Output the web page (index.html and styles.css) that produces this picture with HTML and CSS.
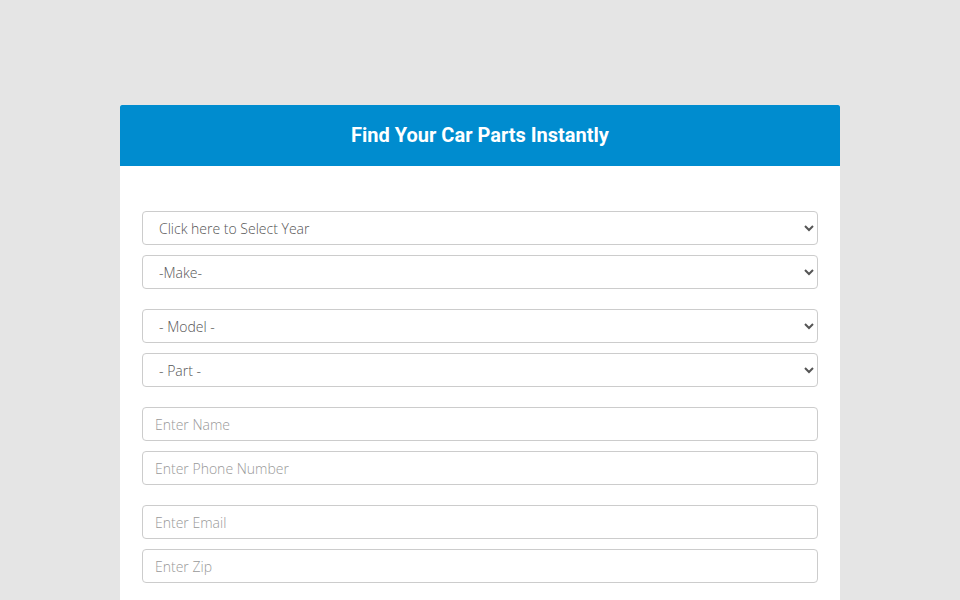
FILE: index.html
```html
<!DOCTYPE html>
<html>
<head>
<meta charset="utf-8">
<link rel="stylesheet" href="styles.css">
</head>
<body>
<div class="page">
  <div class="card">
    <div class="card-head">Find Your Car Parts Instantly</div>
    <form class="card-body">
      <div class="group">
        <select class="field"><option>Click here to Select Year</option></select>
        <select class="field"><option>-Make-</option></select>
      </div>
      <div class="group">
        <select class="field"><option>- Model -</option></select>
        <select class="field"><option>- Part -</option></select>
      </div>
      <div class="group">
        <input class="field" type="text" placeholder="Enter Name">
        <input class="field" type="text" placeholder="Enter Phone Number">
      </div>
      <div class="group">
        <input class="field" type="text" placeholder="Enter Email">
        <input class="field" type="text" placeholder="Enter Zip">
      </div>
    </form>
  </div>
</div>
</body>
</html>
```

FILE: styles.css
```css
html, body {
  margin: 0;
  padding: 0;
  background: #e5e5e5;
  font-family: "Open Sans", "Liberation Sans", sans-serif;
}
.page {
  padding-top: 105px;
  display: flex;
  justify-content: center;
}
.card {
  width: 720px;
  background: #ffffff;
}
.card-head {
  box-sizing: border-box;
  height: 61px;
  padding-bottom: 2px;
  background: #008ccf;
  color: #ffffff;
  font-family: Roboto, "Liberation Sans", sans-serif;
  font-weight: 700;
  font-size: 20px;
  display: flex;
  align-items: center;
  justify-content: center;
  border-radius: 2px 2px 0 0;
}
.card-body {
  margin: 0;
  padding: 45px 22px 40px;
  display: flex;
  flex-direction: column;
  gap: 20px;
}
.group {
  display: flex;
  flex-direction: column;
  gap: 10px;
}
.field {
  box-sizing: border-box;
  width: 100%;
  height: 34px;
  margin: 0;
  border: 1px solid #cccccc;
  border-radius: 4px;
  background: #ffffff;
  font-family: "Open Sans", "Liberation Sans", sans-serif;
  font-weight: 300;
  font-size: 14px;
  color: #555555;
  padding: 0 12px;
  outline: none;
}
select.field {
  padding: 0 6px 0 12px;
}
.field::placeholder {
  color: #999999;
}
```
